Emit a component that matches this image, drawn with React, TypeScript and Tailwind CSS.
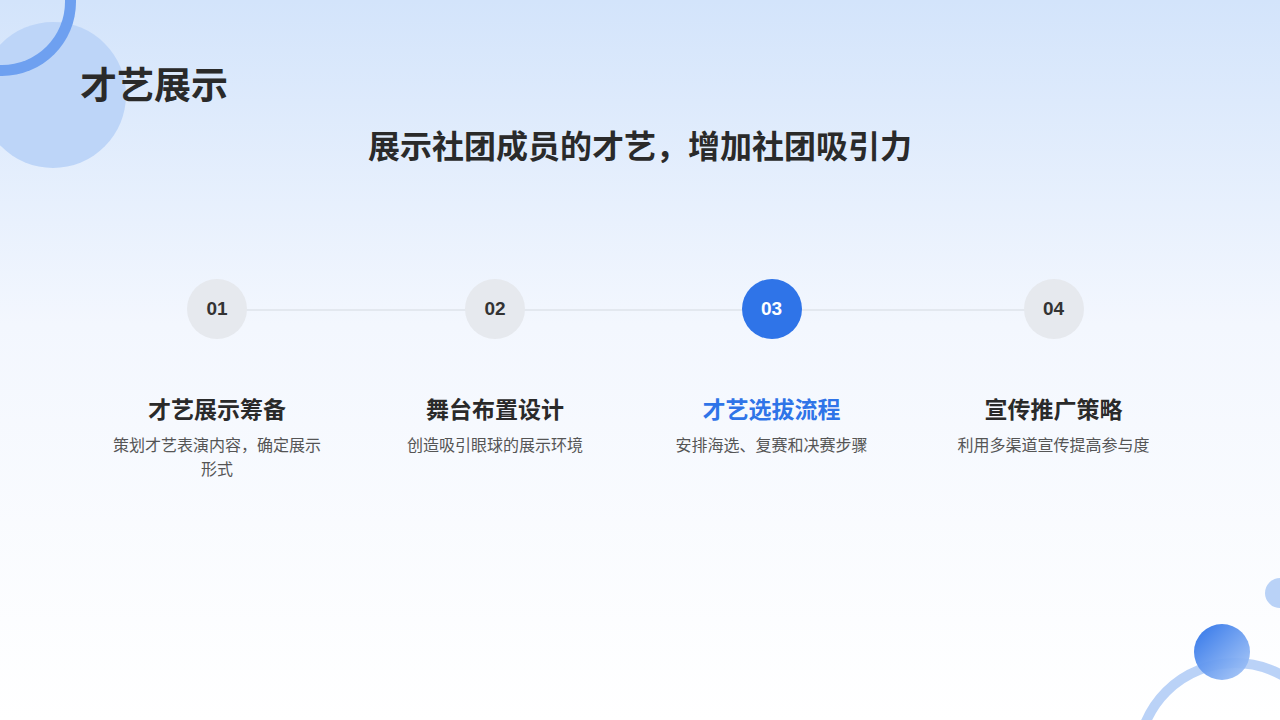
const steps = [
  { no: "01", title: "才艺展示筹备", desc: "策划才艺表演内容，确定展示形式" },
  { no: "02", title: "舞台布置设计", desc: "创造吸引眼球的展示环境" },
  { no: "03", title: "才艺选拔流程", desc: "安排海选、复赛和决赛步骤", active: true },
  { no: "04", title: "宣传推广策略", desc: "利用多渠道宣传提高参与度" },
];

export default function App() {
  return (
    <div
      className="relative w-[1280px] h-[720px] overflow-hidden bg-gradient-to-b from-[#d3e4fb] via-[#f3f7fe] via-45% to-white"
      style={{ fontFamily: '"Noto Sans CJK SC", "Noto Sans", sans-serif' }}
    >
      {/* decorations */}
      <div className="absolute left-[-20px] top-[22px] w-[146px] h-[146px] rounded-full bg-[#bdd5f8]" />
      <div className="absolute left-[-72px] top-[-72px] w-[148px] h-[148px] rounded-full border-[11px] border-[#6ea0f0] border-l-[#2f72e8]" />
      <div className="absolute left-[1133px] top-[658px] w-[204px] h-[204px] rounded-full border-[10px] border-[#a9c7f5]/80" />
      <div className="absolute left-[1194px] top-[624px] w-[56px] h-[56px] rounded-full bg-gradient-to-br from-[#2f74e8] to-[#a8c7f6]/90" />
      <div className="absolute left-[1265px] top-[578px] w-[30px] h-[30px] rounded-full bg-[#b9d2f7]" />

      <div className="relative">
        <h1 className="pl-[80px] pt-[60px] text-[37px] leading-[46px] font-bold text-[#2a2a2a]">才艺展示</h1>
        <h2 className="mt-[18px] text-center text-[32px] leading-[40px] font-bold text-[#2a2a2a]">
          展示社团成员的才艺，增加社团吸引力
        </h2>

        <div className="relative mt-[115px] ml-[76px] w-[1120px]">
          <div className="absolute left-[141px] right-[144px] top-[30px] h-[2px] bg-[#e3e8ef]" />
          <div className="relative grid grid-cols-[282px_274px_279px_285px]">
            {steps.map((s) => (
              <div key={s.no} className="flex flex-col items-center">
                <div
                  className={`w-[60px] h-[60px] rounded-full flex items-center justify-center text-[19px] font-bold ${
                    s.active ? "bg-[#2f74e8] text-white" : "bg-[#e6e9ee] text-[#333]"
                  }`}
                  style={{ fontFamily: '"Liberation Sans", Arial, sans-serif' }}
                >
                  {s.no}
                </div>
                <div className={`mt-[53px] text-[23px] leading-[32px] font-bold ${s.active ? "text-[#2f74e8]" : "text-[#2a2a2a]"}`}>
                  {s.title}
                </div>
                <div className="mt-[8px] w-[212px] text-center text-[16px] leading-[24px] text-[#555]">{s.desc}</div>
              </div>
            ))}
          </div>
        </div>
      </div>
    </div>
  );
}
